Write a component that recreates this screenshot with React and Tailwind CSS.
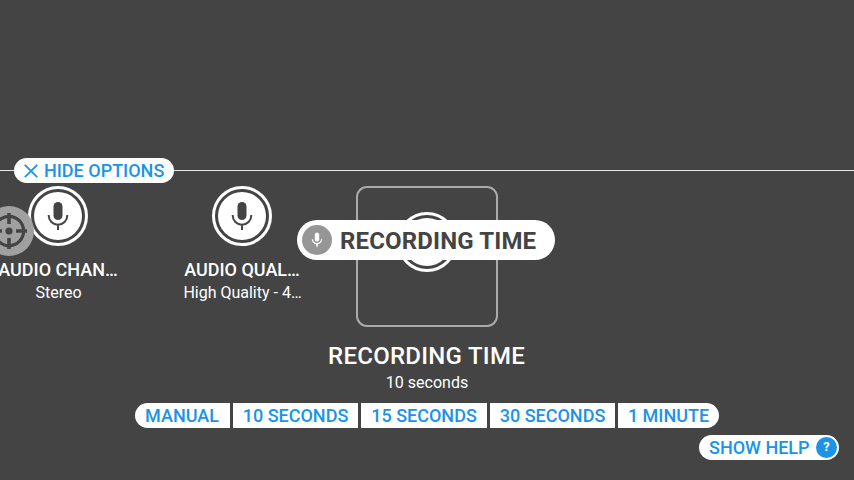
const MIC =
  "M12 14c1.66 0 2.99-1.34 2.99-3L15 5c0-1.66-1.34-3-3-3S9 3.34 9 5v6c0 1.66 1.34 3 3 3zm5.3-3c0 3-2.54 5.1-5.3 5.1S6.7 14 6.7 11H5c0 3.41 2.72 6.23 6 6.72V21h2v-3.28c3.28-.48 6-3.3 6-6.72h-1.7z";

function Mic({ className }) {
  return (
    <svg viewBox="0 0 24 24" fill="currentColor" className={className}>
      <path d={MIC} />
    </svg>
  );
}

function MicBadge() {
  return (
    <div className="flex size-[60px] shrink-0 items-center justify-center rounded-full border-[3px] border-white text-[#444]">
      <div className="flex size-12 items-center justify-center rounded-full bg-white">
        <svg viewBox="0 0 48 48" className="size-12" fill="none" stroke="#444">
          <rect x="19.5" y="10" width="9" height="18" rx="4.5" fill="#444" stroke="none" />
          <path d="M14.7 23v.5a9.3 9.3 0 0 0 18.6 0V23M24 32.8V38" strokeWidth="2" />
        </svg>
      </div>
    </div>
  );
}

function Item({ title, value }) {
  return (
    <div className="flex w-[120px] shrink-0 flex-col items-center whitespace-nowrap">
      <MicBadge />
      <div className="mt-[13px] text-lg leading-[22px] font-medium">{title}</div>
      <div className="mt-0.5 pl-px text-base leading-5">{value}</div>
    </div>
  );
}

const choices = [
  ["MANUAL", "w-[95px] rounded-l-full pr-px"],
  ["10 SECONDS", "w-[125px]"],
  ["15 SECONDS", "w-[126px]"],
  ["30 SECONDS", "w-[125px]"],
  ["1 MINUTE", "w-[101px] rounded-r-full"],
];

export default function App() {
  return (
    <div className="relative flex h-[480px] w-[854px] flex-col overflow-hidden bg-[#444] font-['Roboto',sans-serif] text-white">
      <div className="mt-[158px] flex h-[25px] shrink-0 items-center">
        <div className="h-px w-3.5 bg-[#e8e8e8]" />
        <button className="flex h-[25px] w-[160px] items-center rounded-full bg-white pl-2.5 text-lg font-medium whitespace-nowrap text-[#1a93e8]">
          <svg viewBox="0 0 14 14" className="mr-[6px] size-3.5 shrink-0" stroke="currentColor" strokeWidth="1.8">
            <path d="M.8.8l12.4 12.4M13.2.8L.8 13.2" />
          </svg>
          HIDE OPTIONS
        </button>
        <div className="h-px flex-1 bg-[#e8e8e8]" />
      </div>

      <div className="mt-[3px] -ml-[2px] flex h-[141px] shrink-0 items-start">
        <Item title="AUDIO CHAN…" value="Stereo" />
        <div className="w-16 shrink-0" />
        <Item title="AUDIO QUAL…" value="High Quality - 4…" />
        <div className="w-[54px] shrink-0" />
        <div className="flex h-[141px] w-[142px] items-start justify-center rounded-[11px] border-2 border-[#aaa] pt-[23.5px]">
          <MicBadge />
        </div>
      </div>

      <div className="mt-[15px] w-[853px] text-center text-2xl leading-7 font-medium tracking-[0.27px]">RECORDING TIME</div>
      <div className="mt-[3px] w-[854px] text-center text-base leading-5">10 seconds</div>

      <div className="mt-[10px] ml-[135px] flex gap-[3px]">
        {choices.map(([label, shape]) => (
          <button
            key={label}
            className={`flex h-[25px] shrink-0 items-center justify-center bg-white text-lg font-medium whitespace-nowrap text-[#1a93e8] ${shape}`}
          >
            {label}
          </button>
        ))}
      </div>

      <div className="mt-[7px] mr-[15px] flex justify-end">
        <button className="flex h-[25px] w-[140px] items-center justify-between rounded-full bg-white pr-[2px] pl-2.5 text-lg font-medium whitespace-nowrap text-[#1a93e8]">
          SHOW HELP
          <span className="flex size-[21px] items-center justify-center rounded-full bg-[#1a93e8] text-[13px] font-bold text-white">?</span>
        </button>
      </div>

      {/* Focus target that floats over the carousel */}
      <svg viewBox="0 0 50 50" className="absolute top-[206px] -left-4 size-[50px]">
        <circle cx="25" cy="25" r="25" fill="#a0a0a0" />
        <g stroke="#444" fill="none" strokeWidth="3.6">
          <circle cx="25" cy="25" r="14.6" strokeWidth="3.2" />
          <path d="M25 7v11M25 32v11M7 25h11M32 25h11" />
        </g>
        <circle cx="25" cy="25" r="3.6" fill="#444" />
      </svg>

      {/* Label of the item being dragged */}
      <div className="absolute top-[220px] left-[297px] flex h-10 w-[258px] items-center rounded-full bg-white pl-[5px] text-2xl font-bold tracking-[0.15px] whitespace-nowrap text-[#444]">
        <span className="mr-2 flex size-[30px] shrink-0 items-center justify-center rounded-full bg-[#969696] text-white">
          <Mic className="size-[18px]" />
        </span>
        <span className="pt-0.5">RECORDING TIME</span>
      </div>
    </div>
  );
}
